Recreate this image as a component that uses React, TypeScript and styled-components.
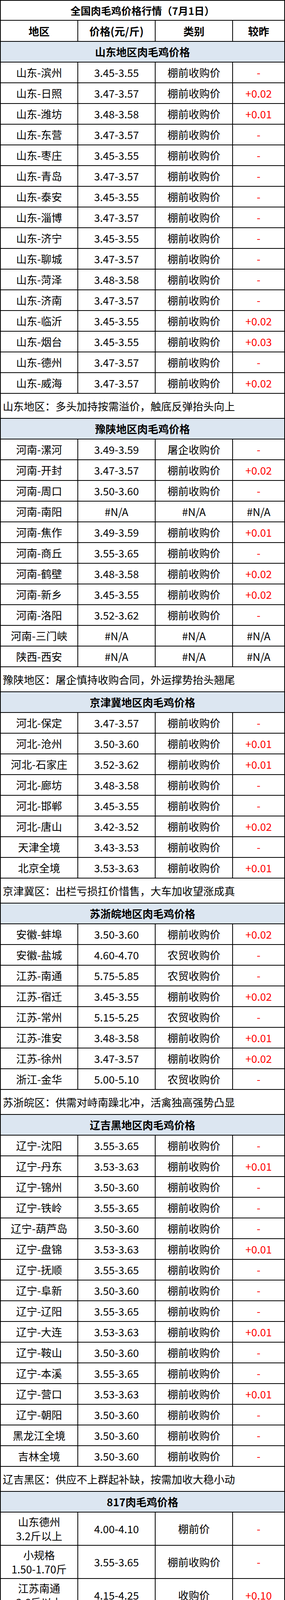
import React from "react";
import styled, { createGlobalStyle } from "styled-components";

const GlobalStyle = createGlobalStyle`
  html, body {
    margin: 0;
    padding: 0;
    background: #ffffff;
  }
  body {
    font-family: "Noto Sans CJK SC", "Noto Sans", sans-serif;
    color: #000000;
  }
`;

const Sheet = styled.div`
  width: 729px;
  box-sizing: border-box;
  display: grid;
  grid-template-columns: 196px 196px 196px 1fr;
  grid-auto-rows: min-content;
  gap: 2px;
  padding: 2px;
  background: #000000;
`;

const Base = styled.div`
  box-sizing: border-box;
  min-height: 0;
  overflow: hidden;
  background: #ffffff;
  display: flex;
  align-items: center;
  font-size: 27px;
`;

const Title = styled(Base)`
  grid-column: 1 / -1;
  height: 49px;
  justify-content: center;
  font-size: 26px;
  font-weight: 700;
`;

const HeadCell = styled(Base)`
  height: 52px;
  justify-content: center;
  font-weight: 700;
`;

const SectionCell = styled(Base)`
  grid-column: 1 / -1;
  height: 51px;
  background: #dce6f1;
  justify-content: center;
  font-weight: 700;
`;

const Cell = styled(Base)<{ $red?: boolean; $tall?: boolean }>`
  height: ${(p) => (p.$tall ? "83px" : "51px")};
  flex-direction: column;
  justify-content: center;
  text-align: center;
  line-height: 36px;
  color: ${(p) => (p.$red ? "#ff0000" : "#000000")};
  white-space: nowrap;
`;

const NoteCell = styled(Base)`
  grid-column: 1 / -1;
  height: 62px;
  padding-left: 5px;
  white-space: nowrap;
`;

type Row = [string, string, string, string];

interface Section {
  name: string;
  rows: Row[];
  note: string;
  tall?: boolean;
}

const P = "棚前收购价";
const N = "农贸收购价";
const NA = "#N/A";

const sections: Section[] = [
  {
    name: "山东地区肉毛鸡价格",
    rows: [
      ["山东-滨州", "3.45-3.55", P, "-"],
      ["山东-日照", "3.47-3.57", P, "+0.02"],
      ["山东-潍坊", "3.48-3.58", P, "+0.01"],
      ["山东-东营", "3.47-3.57", P, "-"],
      ["山东-枣庄", "3.45-3.55", P, "-"],
      ["山东-青岛", "3.47-3.57", P, "-"],
      ["山东-泰安", "3.45-3.55", P, "-"],
      ["山东-淄博", "3.47-3.57", P, "-"],
      ["山东-济宁", "3.45-3.55", P, "-"],
      ["山东-聊城", "3.47-3.57", P, "-"],
      ["山东-菏泽", "3.48-3.58", P, "-"],
      ["山东-济南", "3.47-3.57", P, "-"],
      ["山东-临沂", "3.45-3.55", P, "+0.02"],
      ["山东-烟台", "3.45-3.55", P, "+0.03"],
      ["山东-德州", "3.47-3.57", P, "-"],
      ["山东-威海", "3.47-3.57", P, "+0.02"],
    ],
    note: "山东地区：多头加持按需溢价，触底反弹抬头向上",
  },
  {
    name: "豫陕地区肉毛鸡价格",
    rows: [
      ["河南-漯河", "3.49-3.59", "屠企收购价", "-"],
      ["河南-开封", "3.47-3.57", P, "+0.02"],
      ["河南-周口", "3.50-3.60", P, "-"],
      ["河南-南阳", NA, NA, NA],
      ["河南-焦作", "3.49-3.59", P, "+0.01"],
      ["河南-商丘", "3.55-3.65", P, "-"],
      ["河南-鹤壁", "3.48-3.58", P, "+0.02"],
      ["河南-新乡", "3.45-3.55", P, "+0.02"],
      ["河南-洛阳", "3.52-3.62", P, "-"],
      ["河南-三门峡", NA, NA, NA],
      ["陕西-西安", NA, NA, NA],
    ],
    note: "豫陕地区：屠企慎持收购合同，外运撑势抬头翘尾",
  },
  {
    name: "京津冀地区肉毛鸡价格",
    rows: [
      ["河北-保定", "3.47-3.57", P, "-"],
      ["河北-沧州", "3.50-3.60", P, "+0.01"],
      ["河北-石家庄", "3.52-3.62", P, "+0.01"],
      ["河北-廊坊", "3.48-3.58", P, "-"],
      ["河北-邯郸", "3.45-3.55", P, "-"],
      ["河北-唐山", "3.42-3.52", P, "+0.02"],
      ["天津全境", "3.43-3.53", P, "-"],
      ["北京全境", "3.53-3.63", P, "+0.01"],
    ],
    note: "京津冀区：出栏亏损扛价惜售，大车加收望涨成真",
  },
  {
    name: "苏浙皖地区肉毛鸡价格",
    rows: [
      ["安徽-蚌埠", "3.50-3.60", P, "+0.02"],
      ["安徽-盐城", "4.60-4.70", N, "-"],
      ["江苏-南通", "5.75-5.85", N, "-"],
      ["江苏-宿迁", "3.45-3.55", P, "+0.02"],
      ["江苏-常州", "5.15-5.25", N, "-"],
      ["江苏-淮安", "3.48-3.58", P, "+0.01"],
      ["江苏-徐州", "3.47-3.57", P, "+0.02"],
      ["浙江-金华", "5.00-5.10", N, "-"],
    ],
    note: "苏浙皖区：供需对峙南躁北冲，活禽独高强势凸显",
  },
  {
    name: "辽吉黑地区肉毛鸡价格",
    rows: [
      ["辽宁-沈阳", "3.55-3.65", P, "-"],
      ["辽宁-丹东", "3.53-3.63", P, "+0.01"],
      ["辽宁-锦州", "3.50-3.60", P, "-"],
      ["辽宁-铁岭", "3.55-3.65", P, "-"],
      ["辽宁-葫芦岛", "3.50-3.60", P, "-"],
      ["辽宁-盘锦", "3.53-3.63", P, "+0.01"],
      ["辽宁-抚顺", "3.55-3.65", P, "-"],
      ["辽宁-阜新", "3.50-3.60", P, "-"],
      ["辽宁-辽阳", "3.55-3.65", P, "-"],
      ["辽宁-大连", "3.53-3.63", P, "+0.01"],
      ["辽宁-鞍山", "3.50-3.60", P, "-"],
      ["辽宁-本溪", "3.55-3.65", P, "-"],
      ["辽宁-营口", "3.53-3.63", P, "+0.01"],
      ["辽宁-朝阳", "3.50-3.60", P, "-"],
      ["黑龙江全境", "3.50-3.60", P, "-"],
      ["吉林全境", "3.50-3.60", P, "-"],
    ],
    note: "辽吉黑区：供应不上群起补缺，按需加收大稳小动",
  },
  {
    name: "817肉毛鸡价格",
    tall: true,
    rows: [
      ["山东德州\n3.2斤以上", "4.00-4.10", "棚前价", "-"],
      ["小规格\n1.50-1.70斤", "3.55-3.65", P, "-"],
      ["江苏南通\n3.6斤以上", "4.15-4.25", "收购价", "+0.10"],
      ["山东聊城\n2.8-3.2斤", "3.95-4.05", P, "-"],
      ["浙江金华\n3.6斤以上", "5.00-5.10", N, "-"],
      ["河南濮阳\n3.2-3.5斤", "3.95-4.05", P, "-"],
      ["河南新乡\n3.2-3.5斤", "3.90-4.00", P, "+0.05"],
      ["河南开封\n3.2-3.5斤", "4.05-4.15", P, "+0.05"],
      ["津冀地区\n2.8-3.2斤", NA, NA, NA],
    ],
    note: "肉杂817鸡市场棚前行情：控价无果，破局向上",
  },
];

function Lines({ text }: { text: string }) {
  return (
    <>
      {text.split("\n").map((line, i) => (
        <span key={i}>{line}</span>
      ))}
    </>
  );
}

export default function App() {
  return (
    <>
      <GlobalStyle />
      <Sheet>
        <Title>全国肉毛鸡价格行情（7月1日）</Title>
        <HeadCell>地区</HeadCell>
        <HeadCell>价格(元/斤)</HeadCell>
        <HeadCell>类别</HeadCell>
        <HeadCell>较昨</HeadCell>
        {sections.map((s) => (
          <React.Fragment key={s.name}>
            <SectionCell>{s.name}</SectionCell>
            {s.rows.map((r, i) => (
              <React.Fragment key={i}>
                <Cell $tall={s.tall}>
                  <Lines text={r[0]} />
                </Cell>
                <Cell $tall={s.tall}>{r[1]}</Cell>
                <Cell $tall={s.tall}>{r[2]}</Cell>
                <Cell $tall={s.tall} $red={r[3] !== NA}>
                  {r[3]}
                </Cell>
              </React.Fragment>
            ))}
            <NoteCell>{s.note}</NoteCell>
          </React.Fragment>
        ))}
      </Sheet>
    </>
  );
}
